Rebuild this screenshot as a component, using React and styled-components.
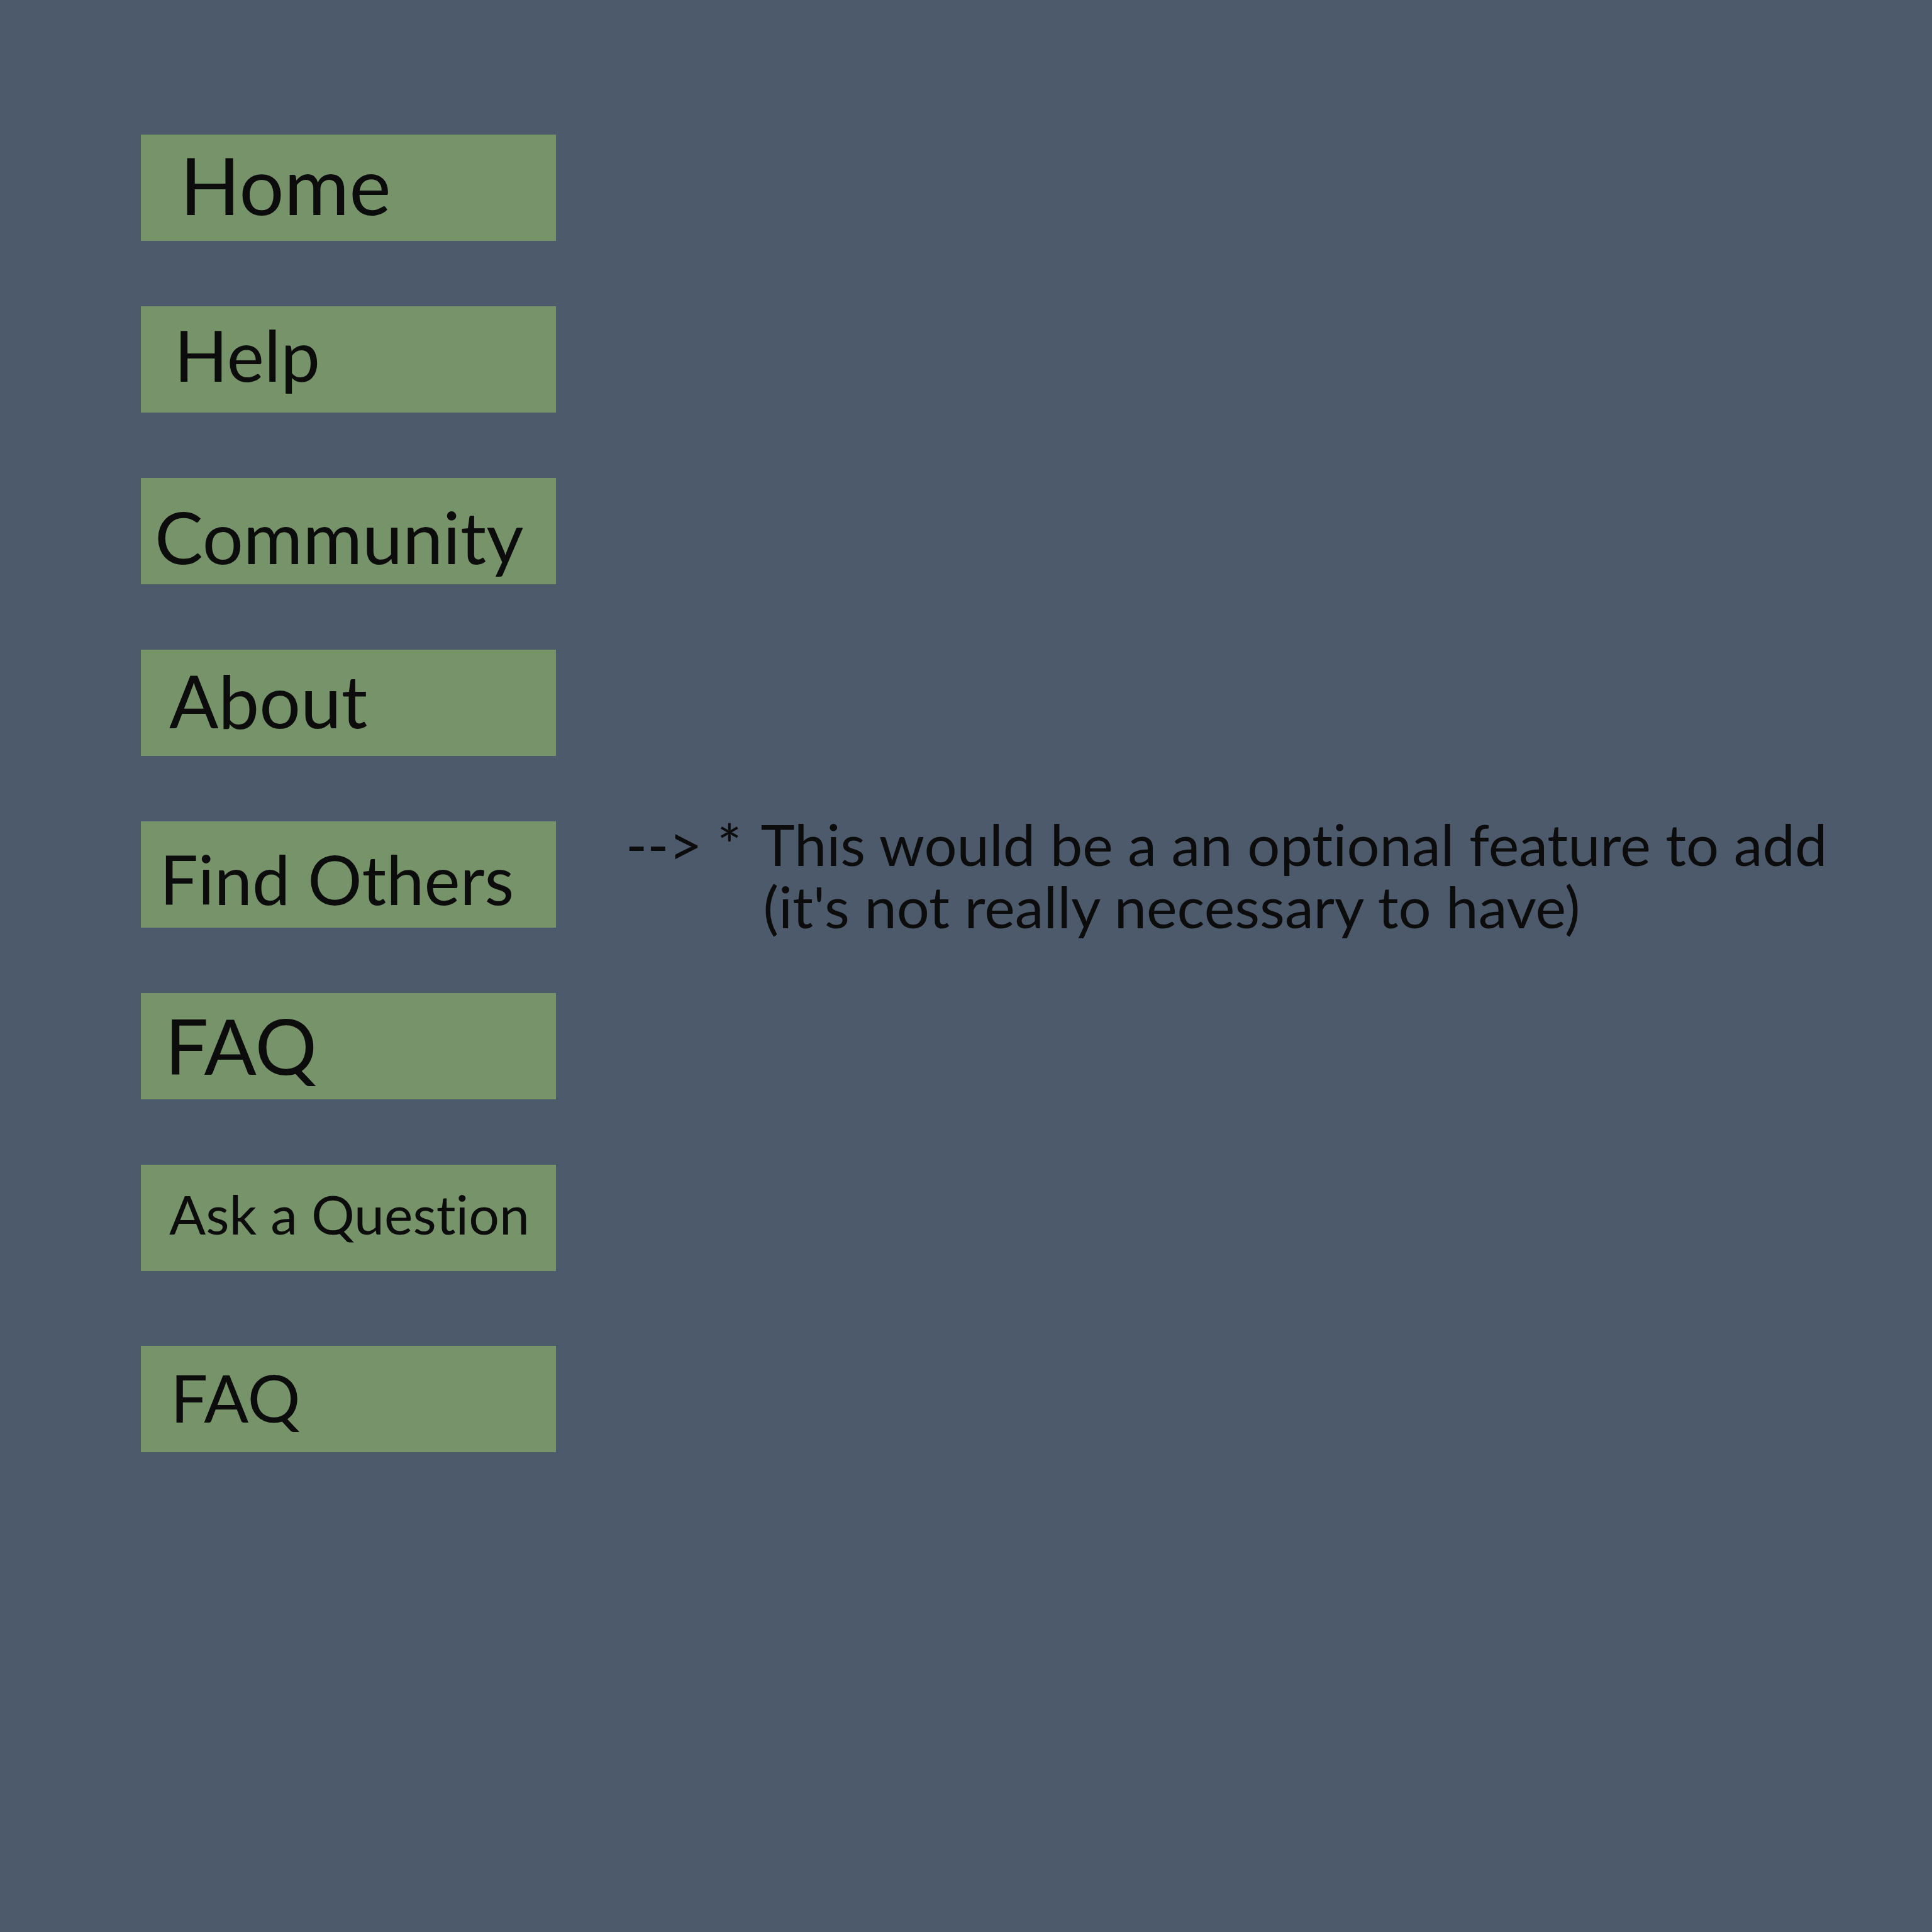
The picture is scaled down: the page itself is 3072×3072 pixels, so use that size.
import React from "react";
import styled, { createGlobalStyle } from "styled-components";

const GlobalStyle = createGlobalStyle`
  html, body {
    margin: 0;
    padding: 0;
    background: #4d5a6b;
  }
  body {
    font-family: Lato, "Noto Sans", sans-serif;
    font-variant-ligatures: none;
    color: #0c0c0c;
  }
`;

const links = [
  { label: "Home", size: 126, left: 62, base: 129 },
  { label: "Help", size: 112, left: 53, base: 121 },
  { label: "Community", size: 115, left: 22, base: 137 },
  { label: "About", size: 116, left: 45, base: 126 },
  { label: "Find Others", size: 108, left: 30, base: 133 },
  { label: "FAQ", size: 123, left: 38, base: 130 },
  { label: "Ask a Question", size: 86, left: 45, base: 112 },
  { label: "FAQ", size: 105, left: 47, base: 122, apart: true },
];

export default function App() {
  return (
    <>
      <GlobalStyle />
      <Page>
        <Nav>
          {links.map((el, i) => (
            <NavButton key={i} $apart={el.apart}>
              <Label $size={el.size} $left={el.left} $base={el.base}>
                {el.label}
              </Label>
            </NavButton>
          ))}
        </Nav>

        <Note>
          <Arrow>--&gt; *</Arrow>
          <NoteText>
            <NoteLine>This would be a an optional feature to add</NoteLine>
            <NoteLine $indent>(it's not really necessary to have)</NoteLine>
          </NoteText>
        </Note>
      </Page>
    </>
  );
}

const Page = styled.div`
  display: flex;
  align-items: flex-start;
  gap: 111px;
  min-height: 3072px;
  padding: 214px 0 0 224px;
  box-sizing: border-box;
`;

const Nav = styled.nav`
  display: flex;
  flex-direction: column;
  gap: 104px;
  width: 660px;
  flex-shrink: 0;
`;

const NavButton = styled.div`
  height: 169px;
  background: #77936a;
  margin-top: ${(p) => (p.$apart ? "15px" : "0")};
  overflow: hidden;
`;

const Label = styled.div`
  font-size: ${(p) => p.$size}px;
  line-height: 1;
  padding-left: ${(p) => p.$left}px;
  padding-top: ${(p) => Math.round(p.$base - p.$size * 0.89)}px;
  white-space: nowrap;
`;

const Note = styled.div`
  display: flex;
  gap: 30px;
  margin-top: 1078px;
  font-size: 92px;
  line-height: 99px;
  white-space: nowrap;
`;

const Arrow = styled.span``;

const NoteText = styled.div`
  display: flex;
  flex-direction: column;
`;

const NoteLine = styled.span`
  padding-left: ${(p) => (p.$indent ? "4px" : "0")};
`;
